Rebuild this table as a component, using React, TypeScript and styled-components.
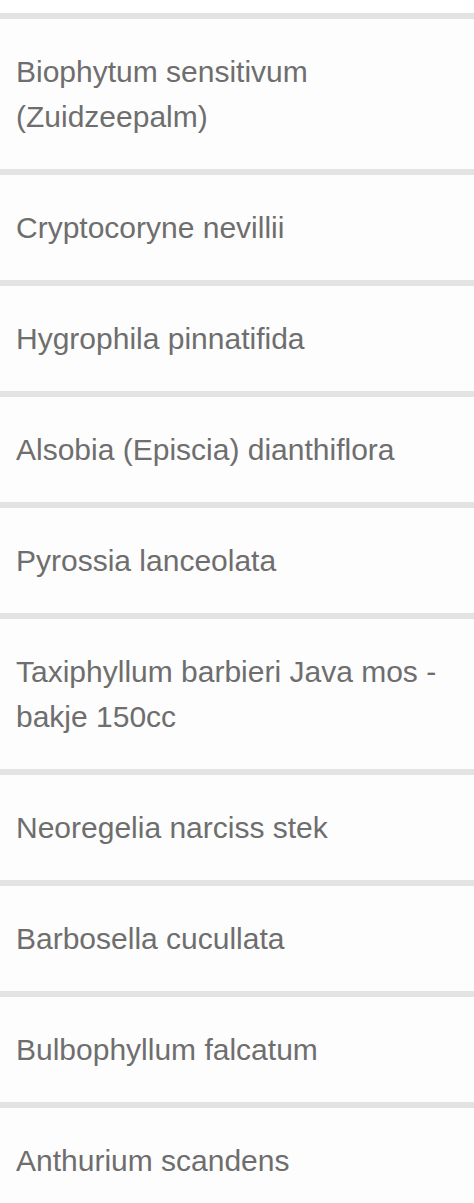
import React from 'react'
import styled, { createGlobalStyle } from 'styled-components'

const GlobalStyle = createGlobalStyle`
	html, body {
		margin: 0;
		padding: 0;
		background: #ffffff;
	}
`

const List = styled.ul`
	list-style: none;
	margin: 0;
	padding: 13px 0 0;
	font-family: 'Liberation Sans', Arial, sans-serif;
`

const Item = styled.li`
	border-top: 6px solid #e3e3e3;
	background: #fdfdfd;
	padding: 30px 16px;
	font-size: 30px;
	line-height: 45px;
	color: #6e6e6e;
`

const plants = [
	'Biophytum sensitivum (Zuidzeepalm)',
	'Cryptocoryne nevillii',
	'Hygrophila pinnatifida',
	'Alsobia (Episcia) dianthiflora',
	'Pyrossia lanceolata',
	'Taxiphyllum barbieri Java mos - bakje 150cc',
	'Neoregelia narciss stek',
	'Barbosella cucullata',
	'Bulbophyllum falcatum',
	'Anthurium scandens',
]

export default function App() {
	return (
		<>
			<GlobalStyle />
			<List>
				{plants.map((name) => (
					<Item key={name}>{name}</Item>
				))}
			</List>
		</>
	)
}
